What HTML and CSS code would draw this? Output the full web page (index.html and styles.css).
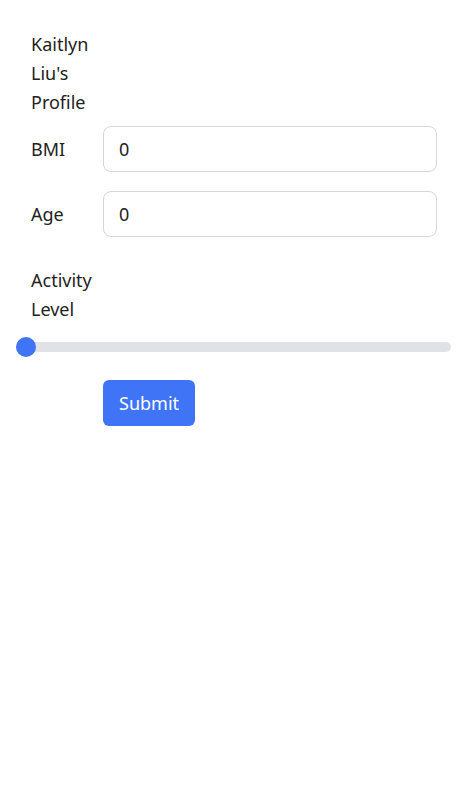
FILE: index.html
```html
<!DOCTYPE html>
<html lang="en">
<head>
<meta charset="utf-8">
<title>Profile</title>
<link rel="stylesheet" href="styles.css">
</head>
<body>
<main class="page">
  <form class="profile-form">
    <h1 class="title">Kaitlyn Liu's Profile</h1>
    <div class="row">
      <label class="label" for="bmi">BMI</label>
      <input class="field" id="bmi" type="text" value="0">
    </div>
    <div class="row">
      <label class="label" for="age">Age</label>
      <input class="field" id="age" type="text" value="0">
    </div>
    <div class="activity">
      <label class="label" for="activity">Activity Level</label>
    </div>
    <input class="slider" id="activity" type="range" min="0" max="10" value="0">
    <div class="actions">
      <button class="submit" type="button">Submit</button>
    </div>
  </form>
</main>
</body>
</html>
```

FILE: styles.css
```css
* { box-sizing: border-box; }
body {
  margin: 0;
  background: #ffffff;
  font-family: "Noto Sans", "Open Sans", sans-serif;
  color: #222222;
}
.page {
  padding: 16px;
}
.profile-form {
  display: flex;
  flex-direction: column;
}
.title {
  margin: 14px 0 0 15px;
  width: 70px;
  font-size: 18px;
  font-weight: 400;
  line-height: 29px;
}
.row {
  display: flex;
  align-items: center;
  padding: 0 14px 0 15px;
  margin-top: 9px;
}
.row + .row {
  margin-top: 19px;
}
.label {
  width: 72px;
  flex: none;
  font-size: 18px;
  line-height: 29px;
  padding-right: 2px;
}
.field {
  flex: 1;
  height: 46px;
  border: 1px solid #d4d6da;
  border-radius: 8px;
  padding: 0 15px;
  font: inherit;
  font-size: 18px;
  color: #222222;
  outline: none;
}
.activity {
  padding-left: 15px;
  margin-top: 29px;
}
.activity .label {
  display: block;
  width: 72px;
}
.slider {
  -webkit-appearance: none;
  appearance: none;
  width: 100%;
  height: 10px;
  margin: 18px 0 0;
  background: #e0e2e7;
  border-radius: 5px;
  outline: none;
}
.slider::-webkit-slider-thumb {
  -webkit-appearance: none;
  appearance: none;
  width: 20px;
  height: 20px;
  border-radius: 50%;
  background: #3f74f6;
  border: none;
}
.actions {
  padding-left: 87px;
  margin-top: 28px;
}
.submit {
  height: 46px;
  padding: 0 16px;
  border: none;
  border-radius: 6px;
  background: #3f74f6;
  color: #ffffff;
  font: inherit;
  font-size: 18px;
}
```
